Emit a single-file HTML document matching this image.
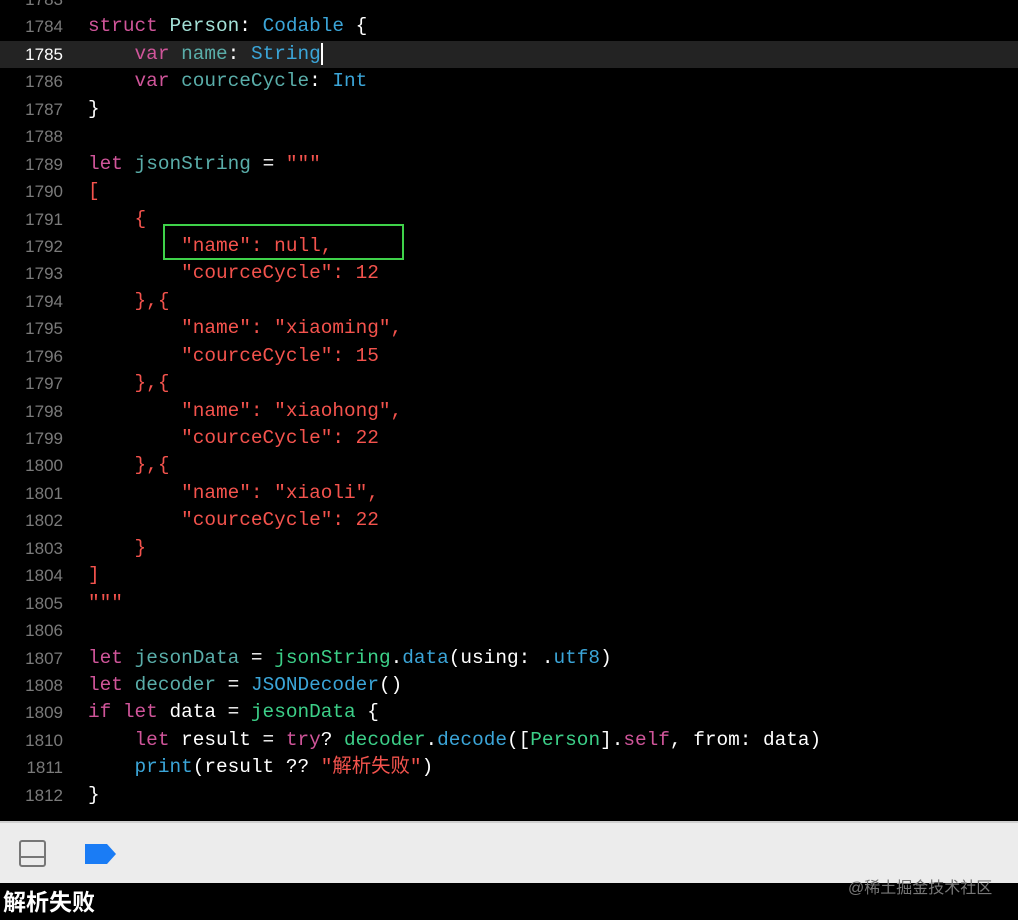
<!DOCTYPE html>
<html><head><meta charset="utf-8"><style>
body{margin:0;width:1018px;height:920px;background:#000;overflow:hidden;position:relative;font-family:"Liberation Mono","Noto Sans CJK SC",monospace}
#code{position:absolute;top:-14px;left:0;width:1018px}
.l{height:27.45px;line-height:27.45px;position:relative;white-space:pre;font-size:19.4px;color:#fff}
.n{position:absolute;left:0;width:63px;text-align:right;font-family:"Liberation Sans",sans-serif;font-size:17px;color:#7a7a7a}
.c{position:absolute;left:88px}
.hl{background:#232323}.hl .n{color:#fff}
.k{color:#d0559a}.t{color:#a3e0d6}.b{color:#3ba5d8}.v{color:#5aaeaa}.s{color:#f4534d}.g{color:#3ccf88}
#box{position:absolute;left:163px;top:224px;width:237px;height:32px;border:2px solid #3fd24a}
#bar{position:absolute;top:821px;left:0;width:1018px;height:60px;background:#ececec;border-top:2px solid #cfcfcf}
#out{position:absolute;top:883px;left:3px;color:#fff;font-weight:bold;font-size:23px;font-family:"Liberation Sans","Noto Sans CJK SC",sans-serif}
#wm{position:absolute;top:874px;left:848px;color:#777;font-size:16px;font-family:"Liberation Sans","Noto Sans CJK SC",sans-serif}
</style></head><body>
<div id="code">
<div class="l"><span class="n">1783</span></div>
<div class="l"><span class="n">1784</span><span class="c"><span class="k">struct</span> <span class="t">Person</span>: <span class="b">Codable</span> {</span></div>
<div class="l hl"><span class="n">1785</span><span class="c">    <span class="k">var</span> <span class="v">name</span>: <span class="b">String</span><span style="border-left:2px solid #fff"></span></span></div>
<div class="l"><span class="n">1786</span><span class="c">    <span class="k">var</span> <span class="v">courceCycle</span>: <span class="b">Int</span></span></div>
<div class="l"><span class="n">1787</span><span class="c">}</span></div>
<div class="l"><span class="n">1788</span></div>
<div class="l"><span class="n">1789</span><span class="c"><span class="k">let</span> <span class="v">jsonString</span> = <span class="s">"""</span></span></div>
<div class="l"><span class="n">1790</span><span class="c s">[</span></div>
<div class="l"><span class="n">1791</span><span class="c s">    {</span></div>
<div class="l"><span class="n">1792</span><span class="c s">        "name": null,</span></div>
<div class="l"><span class="n">1793</span><span class="c s">        "courceCycle": 12</span></div>
<div class="l"><span class="n">1794</span><span class="c s">    },{</span></div>
<div class="l"><span class="n">1795</span><span class="c s">        "name": "xiaoming",</span></div>
<div class="l"><span class="n">1796</span><span class="c s">        "courceCycle": 15</span></div>
<div class="l"><span class="n">1797</span><span class="c s">    },{</span></div>
<div class="l"><span class="n">1798</span><span class="c s">        "name": "xiaohong",</span></div>
<div class="l"><span class="n">1799</span><span class="c s">        "courceCycle": 22</span></div>
<div class="l"><span class="n">1800</span><span class="c s">    },{</span></div>
<div class="l"><span class="n">1801</span><span class="c s">        "name": "xiaoli",</span></div>
<div class="l"><span class="n">1802</span><span class="c s">        "courceCycle": 22</span></div>
<div class="l"><span class="n">1803</span><span class="c s">    }</span></div>
<div class="l"><span class="n">1804</span><span class="c s">]</span></div>
<div class="l"><span class="n">1805</span><span class="c s">"""</span></div>
<div class="l"><span class="n">1806</span></div>
<div class="l"><span class="n">1807</span><span class="c"><span class="k">let</span> <span class="v">jesonData</span> = <span class="g">jsonString</span>.<span class="b">data</span>(using: .<span class="b">utf8</span>)</span></div>
<div class="l"><span class="n">1808</span><span class="c"><span class="k">let</span> <span class="v">decoder</span> = <span class="b">JSONDecoder</span>()</span></div>
<div class="l"><span class="n">1809</span><span class="c"><span class="k">if let</span> data = <span class="g">jesonData</span> {</span></div>
<div class="l"><span class="n">1810</span><span class="c">    <span class="k">let</span> result = <span class="k">try</span>? <span class="g">decoder</span>.<span class="b">decode</span>([<span class="g">Person</span>].<span class="k">self</span>, from: data)</span></div>
<div class="l"><span class="n">1811</span><span class="c">    <span class="b">print</span>(result ?? <span class="s">"解析失败"</span>)</span></div>
<div class="l"><span class="n">1812</span><span class="c">}</span></div>
</div>
<div id="box"></div>
<div id="bar">
<svg style="position:absolute;left:19px;top:17px" width="28" height="28" viewBox="0 0 28 28"><rect x="1" y="1" width="25" height="25" rx="2" fill="none" stroke="#777" stroke-width="2"/><line x1="1" y1="17" x2="26" y2="17" stroke="#777" stroke-width="2"/></svg>
<svg style="position:absolute;left:83px;top:20px" width="34" height="22" viewBox="0 0 34 22"><path d="M2 1 H24 L33 11 L24 21 H2 Z" fill="#1a7cf5"/></svg>
</div>
<div id="out">解析失败</div>
<div id="wm">@稀土掘金技术社区</div>
</body></html>
